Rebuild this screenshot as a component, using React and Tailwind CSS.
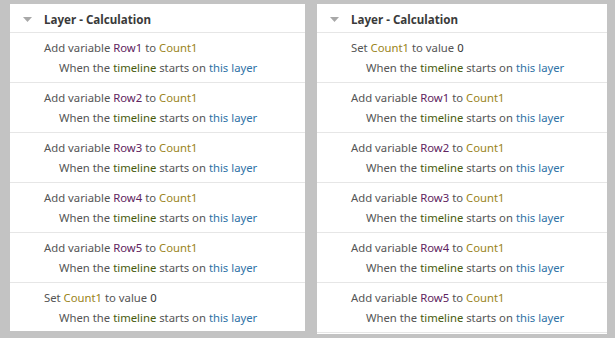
const leftRows = [
  { kind: 'add', row: 'Row1' },
  { kind: 'add', row: 'Row2' },
  { kind: 'add', row: 'Row3' },
  { kind: 'add', row: 'Row4' },
  { kind: 'add', row: 'Row5' },
  { kind: 'set' },
];

const rightRows = [
  { kind: 'set' },
  { kind: 'add', row: 'Row1' },
  { kind: 'add', row: 'Row2' },
  { kind: 'add', row: 'Row3' },
  { kind: 'add', row: 'Row4' },
  { kind: 'add', row: 'Row5' },
];

function Action({ item }) {
  if (item.kind === 'set') {
    return (
      <div>
        Set <span className="text-[#9a8420]">Count1</span> to value <span className="text-[#333]">0</span>
      </div>
    );
  }
  return (
    <div>
      Add variable <span className="text-[#5e2460]">{item.row}</span> to <span className="text-[#9a8420]">Count1</span>
    </div>
  );
}

function Panel({ rows, className }) {
  return (
    <div className={'bg-white flex flex-col overflow-hidden ' + className}>
      <div className="h-[29px] pt-[3px] flex items-center border-b border-[#e6e6e6] shrink-0">
        <div className="w-[34px] flex justify-center">
          <svg width="9" height="6" viewBox="0 0 9 6">
            <path d="M0 0 L9 0 L4.5 5 Z" fill="#a8a8a8" />
          </svg>
        </div>
        <span className="font-bold text-[#3a3a3a] text-[11.6px]">Layer - Calculation</span>
      </div>
      {rows.map((item, i) => (
        <div key={i} className="h-[50px] shrink-0 border-b border-[#e6e6e6] pl-[34px] pt-[5px] text-[#555] leading-[20px]">
          <Action item={item} />
          <div className="pl-[15px]">
            When the <span className="text-[#485c0c]">timeline</span> starts on <span className="text-[#2f72a6]">this layer</span>
          </div>
        </div>
      ))}
    </div>
  );
}

export default function App() {
  return (
    <div className="w-[615px] h-[338px] bg-[#c3c3c3] relative overflow-hidden text-[11.3px] font-['Noto_Sans',sans-serif]">
      <div className="flex pt-[4px] pl-[10px] gap-[12px]">
        <Panel rows={leftRows} className="w-[295px] h-[327px]" />
        <Panel rows={rightRows} className="w-[290px] h-[330px]" />
      </div>
    </div>
  );
}
